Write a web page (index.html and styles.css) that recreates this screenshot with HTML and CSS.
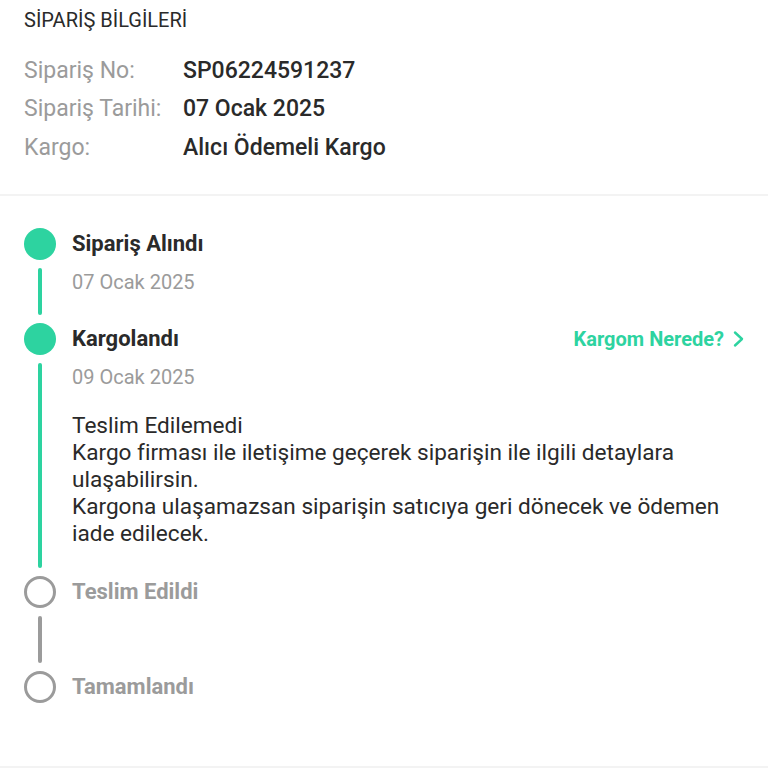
FILE: index.html
```html
<!DOCTYPE html>
<html lang="tr">
<head>
<meta charset="utf-8">
<link rel="stylesheet" href="styles.css">
</head>
<body>
<section class="info">
  <h2 class="info-title">SİPARİŞ BİLGİLERİ</h2>
  <div class="info-row"><span class="info-label">Sipariş No:</span><span class="info-value">SP06224591237</span></div>
  <div class="info-row"><span class="info-label">Sipariş Tarihi:</span><span class="info-value">07 Ocak 2025</span></div>
  <div class="info-row"><span class="info-label">Kargo:</span><span class="info-value">Alıcı Ödemeli Kargo</span></div>
</section>
<section class="timeline">
  <div class="step done">
    <div class="marker"><span class="dot"></span><span class="bar"></span></div>
    <div class="body">
      <div class="head"><span class="title">Sipariş Alındı</span></div>
      <div class="date">07 Ocak 2025</div>
    </div>
  </div>
  <div class="step done">
    <div class="marker"><span class="dot"></span><span class="bar"></span></div>
    <div class="body">
      <div class="head"><span class="title">Kargolandı</span>
        <a class="track">Kargom Nerede?<svg class="chev" width="14" height="18" viewBox="0 0 14 18"><path d="M3 2.5 L10 9 L3 15.5" fill="none" stroke="currentColor" stroke-width="2.4" stroke-linecap="round" stroke-linejoin="round"/></svg></a>
      </div>
      <div class="date">09 Ocak 2025</div>
      <p class="desc">Teslim Edilemedi<br>Kargo firması ile iletişime geçerek siparişin ile ilgili detaylara ulaşabilirsin.<br>Kargona ulaşamazsan siparişin satıcıya geri dönecek ve ödemen iade edilecek.</p>
    </div>
  </div>
  <div class="step pending">
    <div class="marker"><span class="dot"></span><span class="bar"></span></div>
    <div class="body">
      <div class="head"><span class="title">Teslim Edildi</span></div>
    </div>
  </div>
  <div class="step pending last">
    <div class="marker"><span class="dot"></span></div>
    <div class="body">
      <div class="head"><span class="title">Tamamlandı</span></div>
    </div>
  </div>
</section>
</body>
</html>
```
FILE: styles.css
```css
html, body {
  margin: 0;
  padding: 0;
  background: #fff;
}
body {
  font-family: Roboto, "Noto Sans", sans-serif;
  color: #333;
  width: 768px;
  height: 768px;
  overflow: hidden;
}
.info {
  padding: 8px 24px 27px;
  border-bottom: 2px solid #f3f3f3;
}
.info-title {
  margin: 0 0 19px;
  font-size: 20px;
  line-height: 24px;
  font-weight: 400;
  color: #2a2a2a;
}
.info-row {
  display: flex;
  height: 38.5px;
  align-items: center;
  font-size: 23px;
}
.info-label {
  width: 159px;
  color: #9b9b9b;
}
.info-value {
  color: #2a2a2a;
  font-weight: 500;
}
.timeline {
  padding: 32px 22px 0 24px;
  height: 538px;
  border-bottom: 3px solid #f3f3f3;
}
.step {
  display: flex;
  min-height: 95px;
}
.marker {
  width: 32px;
  display: flex;
  flex-direction: column;
  align-items: center;
  flex-shrink: 0;
}
.dot {
  width: 32px;
  height: 32px;
  border-radius: 50%;
  box-sizing: border-box;
  flex-shrink: 0;
}
.bar {
  flex: 1;
  width: 4px;
  border-radius: 2px;
  margin: 8px 0;
}
.done .dot { background: #2dd3a0; }
.done .bar { background: #2dd3a0; }
.pending .dot { border: 3.5px solid #9b9b9b; }
.pending .bar { background: #9b9b9b; }
.body {
  flex: 1;
  padding-left: 16px;
  padding-bottom: 29px;
}
.head {
  display: flex;
  justify-content: space-between;
  align-items: center;
  height: 32px;
}
.title {
  font-size: 22px;
  font-weight: 700;
  color: #2a2a2a;
}
.pending .title { color: #9b9b9b; }
.date {
  margin-top: 10px;
  font-size: 20px;
  line-height: 24px;
  color: #9b9b9b;
}
.track {
  display: flex;
  align-items: center;
  gap: 8px;
  color: #2dd3a0;
  font-size: 20px;
  font-weight: 700;
}
.desc {
  margin: 23px 0 0;
  font-size: 22.6px;
  line-height: 27px;
  color: #2a2a2a;
}
```
